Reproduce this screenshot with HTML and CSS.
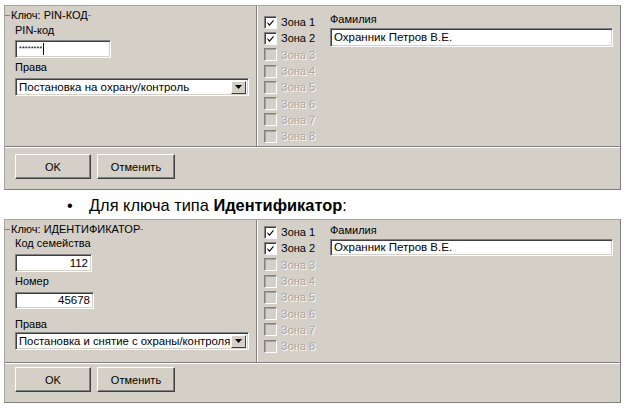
FILE: index.html
```html
<!DOCTYPE html>
<html>
<head>
<meta charset="utf-8">
<link rel="stylesheet" href="styles.css">
</head>
<body>
<div class="dialog d1">
  <div class="top">
    <div class="left">
      <div class="legend"><span>Ключ: PIN-КОД</span></div>
      <div class="lbl l-pin">PIN-код</div>
      <div class="edit pin"><span class="dots">********</span><span class="caret"></span></div>
      <div class="lbl l-prava">Права</div>
      <div class="combo"><span class="ctext">Постановка на охрану/контроль</span><span class="cbtn"><svg width="7" height="4" viewBox="0 0 7 4"><path d="M0 0h7L3.5 4z" fill="#000"/></svg></span></div>
    </div>
    <div class="right">
      <div class="zones">
        <div class="zone on"><span class="cb"><svg width="9" height="9" viewBox="0 0 9 9"><path d="M1.5 4l2 2.2L7.5 1.5v1.8L3.5 8 1.5 5.8z" fill="#000"/></svg></span>Зона 1</div>
        <div class="zone on"><span class="cb"><svg width="9" height="9" viewBox="0 0 9 9"><path d="M1.5 4l2 2.2L7.5 1.5v1.8L3.5 8 1.5 5.8z" fill="#000"/></svg></span>Зона 2</div>
        <div class="zone off"><span class="cb"></span>Зона 3</div>
        <div class="zone off"><span class="cb"></span>Зона 4</div>
        <div class="zone off"><span class="cb"></span>Зона 5</div>
        <div class="zone off"><span class="cb"></span>Зона 6</div>
        <div class="zone off"><span class="cb"></span>Зона 7</div>
        <div class="zone off"><span class="cb"></span>Зона 8</div>
      </div>
      <div class="fam">
        <div class="lbl">Фамилия</div>
        <div class="edit name">Охранник Петров В.Е.</div>
      </div>
    </div>
  </div>
  <div class="bar">
    <div class="btn">OK</div>
    <div class="btn">Отменить</div>
  </div>
</div>

<div class="bullet"><span class="dot">•</span><span>Для ключа типа <b>Идентификатор</b>:</span></div>

<div class="dialog d2">
  <div class="top">
    <div class="left">
      <div class="legend"><span>Ключ: ИДЕНТИФИКАТОР</span></div>
      <div class="lbl l-kod">Код семейства</div>
      <div class="edit num n1">112</div>
      <div class="lbl l-nom">Номер</div>
      <div class="edit num n2">45678</div>
      <div class="lbl l-prava2">Права</div>
      <div class="combo"><span class="ctext">Постановка и снятие с охраны/контроля</span><span class="cbtn"><svg width="7" height="4" viewBox="0 0 7 4"><path d="M0 0h7L3.5 4z" fill="#000"/></svg></span></div>
    </div>
    <div class="right">
      <div class="zones">
        <div class="zone on"><span class="cb"><svg width="9" height="9" viewBox="0 0 9 9"><path d="M1.5 4l2 2.2L7.5 1.5v1.8L3.5 8 1.5 5.8z" fill="#000"/></svg></span>Зона 1</div>
        <div class="zone on"><span class="cb"><svg width="9" height="9" viewBox="0 0 9 9"><path d="M1.5 4l2 2.2L7.5 1.5v1.8L3.5 8 1.5 5.8z" fill="#000"/></svg></span>Зона 2</div>
        <div class="zone off"><span class="cb"></span>Зона 3</div>
        <div class="zone off"><span class="cb"></span>Зона 4</div>
        <div class="zone off"><span class="cb"></span>Зона 5</div>
        <div class="zone off"><span class="cb"></span>Зона 6</div>
        <div class="zone off"><span class="cb"></span>Зона 7</div>
        <div class="zone off"><span class="cb"></span>Зона 8</div>
      </div>
      <div class="fam">
        <div class="lbl">Фамилия</div>
        <div class="edit name">Охранник Петров В.Е.</div>
      </div>
    </div>
  </div>
  <div class="bar">
    <div class="btn">OK</div>
    <div class="btn">Отменить</div>
  </div>
</div>
</body>
</html>
```

FILE: styles.css
```css
html, body {
  margin: 0;
  padding: 0;
  background: #fff;
}
body {
  width: 628px;
  height: 408px;
  overflow: hidden;
  font-family: "Liberation Sans", Arial, sans-serif;
  font-size: 11px;
  color: #000;
}
.dialog {
  margin-left: 4px;
  width: 615px;
  background: #d4d0c8;
  border: 1px solid #a8a49c;
  border-right-color: #808080;
  border-bottom-color: #808080;
}
.d1 { margin-top: 5px; }
.d2 { margin-top: 5px; }
.top {
  display: flex;
  height: 140px;
  border-bottom: 1px solid #808080;
  box-shadow: 0 1px 0 #fff;
}
.d2 .top { height: 142px; }
.left {
  box-sizing: border-box;
  width: 252px;
  padding-left: 10px;
  border-right: 1px solid #808080;
  box-shadow: 1px 0 0 #fff;
  display: flex;
  flex-direction: column;
  align-items: flex-start;
}
.legend {
  margin-left: -10px;
  margin-top: 3px;
  height: 13px;
  line-height: 13px;
  display: flex;
  align-items: center;
}
.legend::before {
  content: "";
  width: 5px;
  height: 1px;
  background: #808080;
  margin-right: 1px;
}
.legend::after {
  content: "";
  width: 3px;
  height: 1px;
  background: #808080;
}
.lbl {
  line-height: 13px;
  height: 13px;
}
.l-pin { margin-top: 2px; }
.l-prava { margin-top: 3px; }
.edit {
  background: #fff;
  box-sizing: border-box;
  border-top: 1px solid #808080;
  border-left: 1px solid #808080;
  border-bottom: 1px solid #fff;
  border-right: 1px solid #fff;
  box-shadow: inset 1px 1px 0 #404040, inset -1px -1px 0 #d4d0c8;
  height: 19px;
  line-height: 17px;
  padding: 0 3px;
  white-space: nowrap;
}
.pin {
  width: 96px;
  height: 18px;
  margin-top: 3px;
  display: flex;
  align-items: center;
}
.dots {
  font-size: 7px;
  letter-spacing: 0.2px;
  line-height: 17px;
  position: relative;
  top: -1px;
}
.caret {
  width: 1px;
  height: 12px;
  background: #000;
  margin-left: 1px;
}
.combo {
  box-sizing: border-box;
  width: 234px;
  height: 18px;
  margin-top: 4px;
  background: #fff;
  border-top: 1px solid #808080;
  border-left: 1px solid #808080;
  border-bottom: 1px solid #fff;
  border-right: 1px solid #fff;
  box-shadow: inset 1px 1px 0 #404040, inset -1px -1px 0 #d4d0c8;
  display: flex;
  align-items: center;
  padding: 2px 2px 2px 3px;
  font-size: 11.5px;
}
.d2 .combo {
  font-size: 11.3px;
  margin-top: 1px;
}
.ctext { flex: 1; white-space: nowrap; overflow: hidden; }
.cbtn {
  flex: none;
  width: 15px;
  height: 13px;
  box-sizing: border-box;
  background: #d4d0c8;
  border-top: 1px solid #fff;
  border-left: 1px solid #fff;
  border-right: 1px solid #404040;
  border-bottom: 1px solid #404040;
  display: flex;
  align-items: center;
  justify-content: center;
}
.l-kod { margin-top: 1px; }
.num {
  text-align: right;
  font-size: 11.5px;
  margin-top: 4px;
}
.n1 { width: 77px; height: 18px; }
.n2 { width: 79px; height: 17px; line-height: 15px; }
.l-nom { margin-top: 3px; }
.l-prava2 { margin-top: 9px; }
.right {
  flex: 1;
  display: flex;
  padding-left: 7px;
}
.zones {
  width: 66px;
  padding-top: 8px;
}
.d2 .zones { padding-top: 4px; }
.zone {
  display: flex;
  align-items: center;
  height: 16.3px;
  white-space: nowrap;
}
.cb {
  box-sizing: border-box;
  width: 13px;
  height: 13px;
  margin-right: 4px;
  border-top: 1px solid #808080;
  border-left: 1px solid #808080;
  border-bottom: 1px solid #fff;
  border-right: 1px solid #fff;
  display: flex;
  align-items: center;
  justify-content: center;
}
.on .cb {
  background: #fff;
  box-shadow: inset 1px 1px 0 #404040;
}
.off .cb {
  background: #d4d0c8;
  box-shadow: inset 1px 1px 0 #a8a49c;
}
.off {
  color: #a9a59e;
  text-shadow: 1px 1px 0 #fff;
}
.fam {
  padding-top: 7px;
  width: 283px;
}
.d2 .fam { padding-top: 4px; }
.fam .lbl { margin-bottom: 2px; }
.name {
  width: 283px;
  font-size: 11.5px;
  height: 19px;
}
.d2 .name { height: 17px; line-height: 15px; }
.bar {
  height: 42px;
  display: flex;
  align-items: flex-start;
  gap: 6px;
  padding-left: 10px;
  padding-top: 7px;
  box-sizing: border-box;
}
.d2 .bar { height: 39px; padding-top: 4px; }
.btn {
  box-sizing: border-box;
  width: 76px;
  height: 25px;
  display: flex;
  align-items: center;
  justify-content: center;
  border-top: 1px solid #fff;
  border-left: 1px solid #fff;
  border-right: 1px solid #404040;
  border-bottom: 1px solid #404040;
  box-shadow: inset -1px -1px 0 #808080;
  font-size: 11px;
}
.btn + .btn { width: 78px; }
.bullet {
  margin-top: 6px;
  padding-left: 67px;
  font-size: 16.4px;
  line-height: 18px;
  display: flex;
}
.dot {
  width: 22px;
}
```
